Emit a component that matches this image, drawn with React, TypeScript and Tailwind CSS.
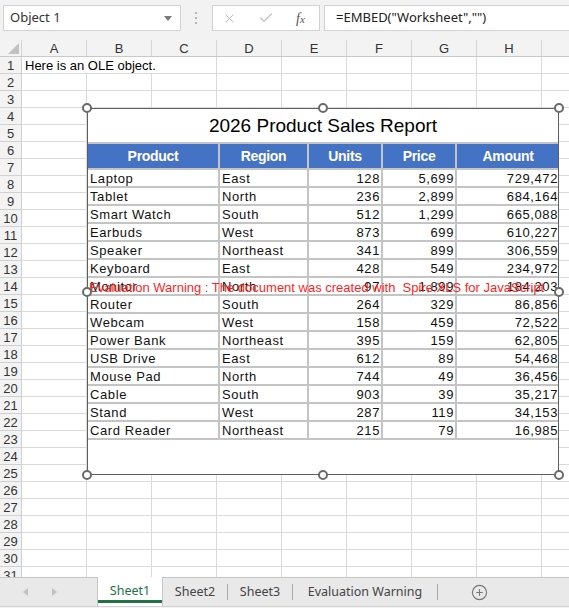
import { X, Check, CirclePlus } from "lucide-react";

const COLS = ["A", "B", "C", "D", "E", "F", "G", "H", "I"];

const SALES = [
  ["Laptop", "East", "128", "5,699", "729,472"],
  ["Tablet", "North", "236", "2,899", "684,164"],
  ["Smart Watch", "South", "512", "1,299", "665,088"],
  ["Earbuds", "West", "873", "699", "610,227"],
  ["Speaker", "Northeast", "341", "899", "306,559"],
  ["Keyboard", "East", "428", "549", "234,972"],
  ["Monitor", "North", "97", "1,899", "184,203"],
  ["Router", "South", "264", "329", "86,856"],
  ["Webcam", "West", "158", "459", "72,522"],
  ["Power Bank", "Northeast", "395", "159", "62,805"],
  ["USB Drive", "East", "612", "89", "54,468"],
  ["Mouse Pad", "North", "744", "49", "36,456"],
  ["Cable", "South", "903", "39", "35,217"],
  ["Stand", "West", "287", "119", "34,153"],
  ["Card Reader", "Northeast", "215", "79", "16,985"],
];

const WIDTHS = ["w-[132px]", "w-[89px]", "w-[74px]", "w-[74px]", "w-[104px]"];

function Handle({ className }: { className: string }) {
  return (
    <div className={`absolute w-[10px] h-[10px] rounded-full bg-white border-2 border-[#6a6a6a] ${className}`} />
  );
}

function OleObject() {
  return (
    <div className="absolute left-[87px] top-[68px] w-[472px] h-[367px]">
      <div className="w-full h-full border border-[#5f5f5f] bg-white overflow-hidden font-['Liberation_Sans',Arial,sans-serif]">
        <div className="h-[33px] pt-[2px] flex items-center justify-center text-[19px] text-black">
          2026 Product Sales Report
        </div>
        <div className="w-[473px] border-t-2 border-[#c4c4c4]">
          <div className="flex">
            {["Product", "Region", "Units", "Price", "Amount"].map((h, i) => (
              <div
                key={h}
                className={`${WIDTHS[i]} shrink-0 h-[26px] pt-px bg-[#4472c4] border-r-2 border-b-2 border-[#c4c4c4] text-white font-bold text-[14px] tracking-[-0.3px] flex items-center justify-center`}
              >
                {h}
              </div>
            ))}
          </div>
          {SALES.map((row) => (
            <div key={row[0]} className="flex">
              {row.map((v, i) => (
                <div
                  key={i}
                  className={`${WIDTHS[i]} shrink-0 h-[18px] border-r-2 border-b-2 border-[#c4c4c4] text-[13px] leading-[17px] tracking-[0.6px] text-[#111] whitespace-nowrap ${
                    i < 2 ? "pl-[2px] text-left" : "pr-[1px] text-right"
                  }`}
                >
                  {v}
                </div>
              ))}
            </div>
          ))}
        </div>
      </div>
      <div className="absolute left-[2px] top-[172px] text-[13px] leading-[16px] text-[#ff1f1f] whitespace-pre font-['Liberation_Sans',Arial,sans-serif]">
        Evaluation Warning : The document was created with  Spire.XLS for JavaScript
      </div>
      <Handle className="-left-[5px] -top-[5px]" />
      <Handle className="left-1/2 -translate-x-1/2 -top-[5px]" />
      <Handle className="-right-[5px] -top-[5px]" />
      <Handle className="-left-[5px] top-1/2 -translate-y-1/2" />
      <Handle className="-right-[5px] top-1/2 -translate-y-1/2" />
      <Handle className="-left-[5px] -bottom-[5px]" />
      <Handle className="left-1/2 -translate-x-1/2 -bottom-[5px]" />
      <Handle className="-right-[5px] -bottom-[5px]" />
    </div>
  );
}

export default function App() {
  const rows = Array.from({ length: 31 }, (_, i) => i + 1);

  return (
    <div className="w-[569px] h-[608px] overflow-hidden bg-white flex flex-col text-[#222]">
      {/* Formula bar */}
      <div className="h-[40px] shrink-0 bg-[#f2f2f2] relative font-['Noto_Sans',sans-serif] text-[13px]">
        <div className="absolute left-[3px] top-[5px] w-[178px] h-[26px] bg-white border border-[#d2d2d2] flex items-center pl-[6px] pr-[8px]">
          <span className="flex-1 text-[#333]">Object 1</span>
          <svg width="8" height="5" viewBox="0 0 8 5">
            <polygon points="0,0 8,0 4,5" fill="#7a7a7a" />
          </svg>
        </div>
        <div className="absolute left-[195px] top-[12px] flex flex-col gap-[3px]">
          <span className="w-[2px] h-[2px] bg-[#b5b5b5]" />
          <span className="w-[2px] h-[2px] bg-[#b5b5b5]" />
          <span className="w-[2px] h-[2px] bg-[#b5b5b5]" />
        </div>
        <div className="absolute left-[212px] top-[5px] w-[108px] h-[26px] bg-white border border-[#d2d2d2] flex items-center">
          <X size={15} strokeWidth={1.5} className="text-[#bdbdbd] ml-[9px]" />
          <Check size={16} strokeWidth={2} className="text-[#c4c4c4] ml-[21px]" />
          <span className="ml-[22px] text-[14px] italic text-[#555] font-['Liberation_Serif',serif]">
            f<span className="text-[11px]">x</span>
          </span>
        </div>
        <div className="absolute left-[324px] top-[5px] w-[260px] h-[26px] bg-white border border-[#d2d2d2] flex items-center pl-[11px] text-[#222]">
          =EMBED("Worksheet","")
        </div>
      </div>

      {/* Sheet grid */}
      <div className="h-[537px] shrink-0 relative overflow-hidden font-['Liberation_Sans',Arial,sans-serif] text-[13px]">
        <div className="flex h-[17px] bg-[#f3f3f3] border-b border-[#c9c9c9]">
          <div className="w-[22px] shrink-0 border-r border-[#d6d6d6] flex items-end justify-end pr-[2px] pb-[2px]">
            <svg width="11" height="11" viewBox="0 0 11 11">
              <polygon points="11,0 11,11 0,11" fill="#c2c2c2" />
            </svg>
          </div>
          {COLS.map((c) => (
            <div
              key={c}
              className="w-[65px] shrink-0 border-r border-[#d6d6d6] text-center leading-[16px] pt-px text-[#333]"
            >
              {c}
            </div>
          ))}
        </div>
        {rows.map((r) => (
          <div key={r} className="flex h-[17px]">
            <div className="w-[22px] shrink-0 bg-[#f3f3f3] border-r border-b border-[#d0d0d0] text-center leading-[16px] pt-px text-[#333]">
              {r}
            </div>
            {COLS.map((c) => {
              const spill = r === 1 && (c === "A" || c === "B");
              return (
                <div
                  key={c}
                  className={`w-[65px] shrink-0 border-b border-[#dadada] relative ${spill ? "" : "border-r"}`}
                >
                  {r === 1 && c === "A" && (
                    <span className="absolute left-[3px] top-[1px] leading-[16px] whitespace-nowrap text-black">
                      Here is an OLE object.
                    </span>
                  )}
                </div>
              );
            })}
          </div>
        ))}
        <OleObject />
      </div>

      {/* Sheet tabs */}
      <div className="h-[29px] shrink-0 bg-[#e9e9e9] border-t border-[#c6c6c6] flex items-stretch font-['Noto_Sans',sans-serif] text-[12.5px] text-[#444]">
        <div className="w-[97px] shrink-0 flex items-center">
          <svg width="5" height="8" viewBox="0 0 5 8" className="ml-[23px]">
            <polygon points="5,0 5,8 0,4" fill="#c3c3c3" />
          </svg>
          <svg width="5" height="8" viewBox="0 0 5 8" className="ml-[24px]">
            <polygon points="0,0 0,8 5,4" fill="#c3c3c3" />
          </svg>
        </div>
        <div className="w-[66px] shrink-0 -mt-px bg-white border-x border-[#c6c6c6] relative flex items-center justify-center text-[#217346]">
          Sheet1
          <div className="absolute left-0 right-0 bottom-[3px] h-[3px] bg-[#217346]" />
        </div>
        <div className="w-[64px] shrink-0 flex items-center justify-center">Sheet2</div>
        <div className="w-px my-[6px] bg-[#a8a8a8]" />
        <div className="w-[64px] shrink-0 flex items-center justify-center">Sheet3</div>
        <div className="w-px my-[6px] bg-[#a8a8a8]" />
        <div className="w-[144px] shrink-0 flex items-center justify-center">Evaluation Warning</div>
        <div className="w-px my-[6px] bg-[#a8a8a8]" />
        <div className="flex items-center ml-[33px]">
          <CirclePlus size={17} strokeWidth={1.6} className="text-[#777]" />
        </div>
      </div>
      <div className="flex-1 bg-[#f3f3f3] border-t border-[#d2d2d2]" />
    </div>
  );
}
